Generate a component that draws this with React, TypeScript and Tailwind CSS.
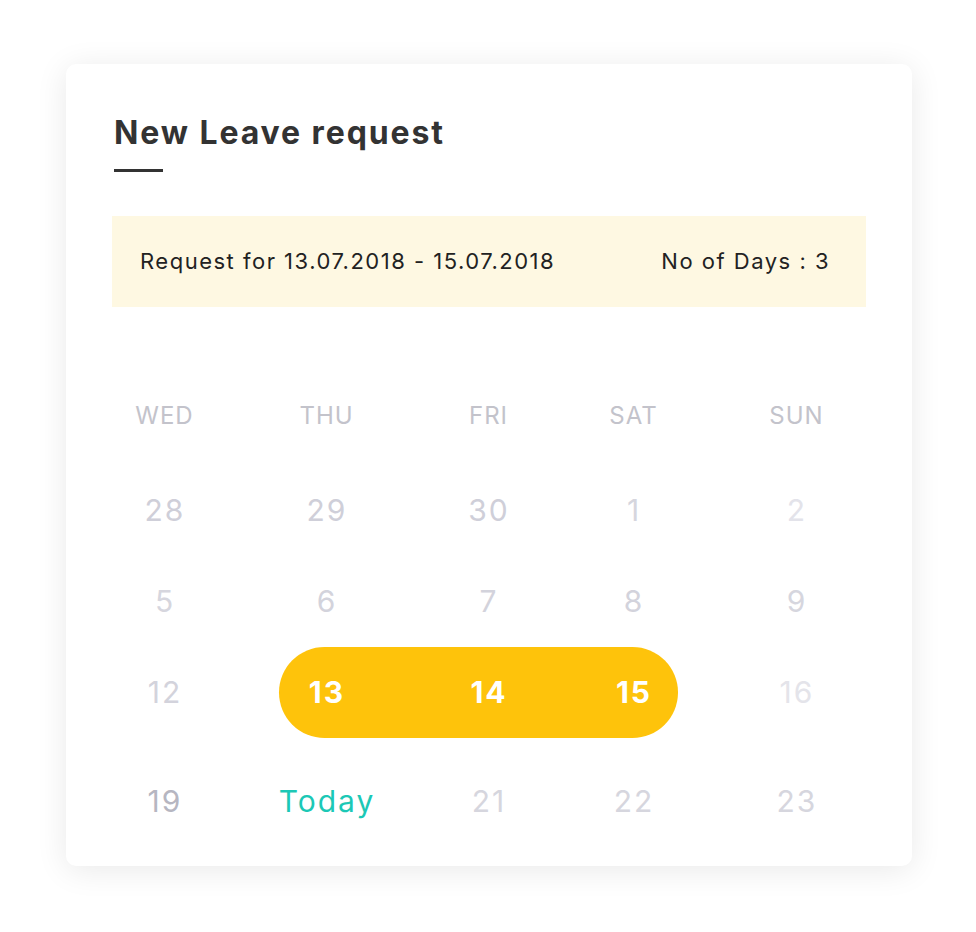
import React from 'react';

type Day = { label: string; color: string };

const headers = ['WED', 'THU', 'FRI', 'SAT', 'SUN'];

const weeks: Day[][] = [
  [
    { label: '28', color: 'text-[#cfcfd9]' },
    { label: '29', color: 'text-[#cfcfd9]' },
    { label: '30', color: 'text-[#cfcfd9]' },
    { label: '1', color: 'text-[#d6d6de]' },
    { label: '2', color: 'text-[#e3e3ea]' },
  ],
  [
    { label: '5', color: 'text-[#d6d6de]' },
    { label: '6', color: 'text-[#d3d3dc]' },
    { label: '7', color: 'text-[#d3d3dc]' },
    { label: '8', color: 'text-[#d3d3dc]' },
    { label: '9', color: 'text-[#d6d6de]' },
  ],
];

const font = { fontFamily: 'Inter, "Open Sans", sans-serif' };

export default function App() {
  return (
    <div className="min-h-[932px] w-[976px] bg-white pt-[64px] pl-[66px]" style={font}>
      <div className="w-[846px] h-[802px] rounded-[10px] bg-white shadow-[0_4px_32px_rgba(0,0,0,0.09)] pt-[53px] px-[46px]">
        {/* heading */}
        <h1 className="pl-[2px] text-[32px] leading-none font-bold tracking-[1.9px] text-[#333333]">
          New Leave request
        </h1>
        <div className="ml-[2px] mt-[20px] h-[3px] w-[49px] bg-[#333333]" />

        {/* summary banner */}
        <div className="mt-[44px] h-[91px] bg-[#fef8e2] flex items-center justify-between pl-[28px] pr-[36px] text-[22px] tracking-[1.5px] text-[#222222]">
          <span>Request for 13.07.2018 - 15.07.2018</span>
          <span>No of Days : 3</span>
        </div>

        {/* calendar */}
        <div className="mt-[81px] grid grid-cols-[104px_220px_104px_186px_140px] text-center">
          {headers.map((h) => (
            <div key={h} className="h-[56px] pl-[1px] flex items-center justify-center text-[24px] tracking-[1px] text-[#c3c3cb]">
              {h}
            </div>
          ))}
        </div>

        <div className="mt-[21px] grid grid-cols-[104px_220px_104px_186px_140px] grid-rows-[91px_91px_91px] text-center text-[30px] tracking-[2px]">
          {weeks.map((w, r) =>
            w.map((d, c) => (
              <div key={`${r}-${c}`} className={`pl-[2px] flex items-center justify-center ${d.color}`}>
                {d.label}
              </div>
            )),
          )}

          <div className="pl-[2px] flex items-center justify-center text-[#d3d3dc] row-start-3 col-start-1">12</div>
          <div className="row-start-3 col-start-2 col-span-3 ml-[63px] mr-[48px] rounded-full bg-[#fec30b]" />
          <div className="pl-[2px] row-start-3 col-start-2 flex items-center justify-center font-bold text-white">13</div>
          <div className="pl-[2px] row-start-3 col-start-3 flex items-center justify-center font-bold text-white">14</div>
          <div className="pl-[2px] row-start-3 col-start-4 flex items-center justify-center font-bold text-white">15</div>
          <div className="pl-[2px] flex items-center justify-center text-[#e4e4ea] row-start-3 col-start-5">16</div>
        </div>

        <div className="mt-[18px] grid grid-cols-[104px_220px_104px_186px_140px] h-[91px] text-center text-[30px] tracking-[2px]">
          <div className="pl-[2px] flex items-center justify-center text-[#b6b6c1]">19</div>
          <div className="pl-[2px] flex items-center justify-center text-[#1cc8b6]">Today</div>
          <div className="pl-[2px] flex items-center justify-center text-[#d6d6de]">21</div>
          <div className="pl-[2px] flex items-center justify-center text-[#d6d6de]">22</div>
          <div className="pl-[2px] flex items-center justify-center text-[#d6d6de]">23</div>
        </div>
      </div>
    </div>
  );
}
